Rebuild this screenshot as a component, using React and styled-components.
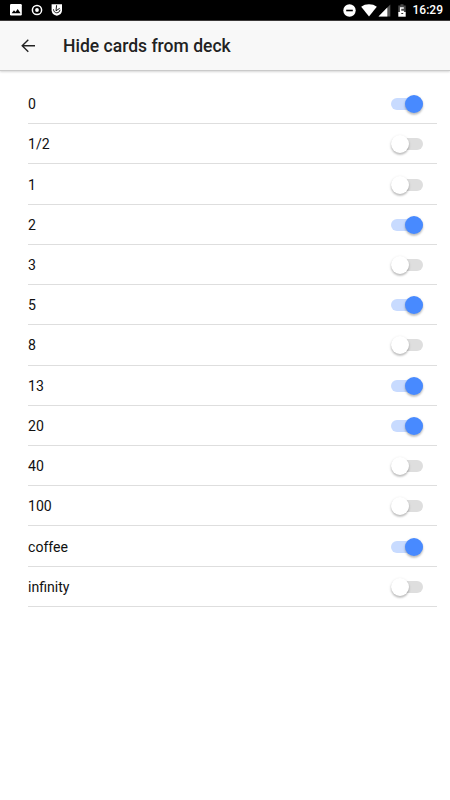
import React, { useState } from "react";
import styled, { createGlobalStyle } from "styled-components";

const CARDS = [
  { label: "0", hidden: true },
  { label: "1/2", hidden: false },
  { label: "1", hidden: false },
  { label: "2", hidden: true },
  { label: "3", hidden: false },
  { label: "5", hidden: true },
  { label: "8", hidden: false },
  { label: "13", hidden: true },
  { label: "20", hidden: true },
  { label: "40", hidden: false },
  { label: "100", hidden: false },
  { label: "coffee", hidden: true },
  { label: "infinity", hidden: false },
];

export default function App() {
  const [cards, setCards] = useState(CARDS);

  const toggle = (label) => {
    setCards((prev) =>
      prev.map((c) => (c.label === label ? { ...c, hidden: !c.hidden } : c))
    );
  };

  return (
    <Screen>
      <GlobalStyle />
      <StatusBar />

      <Header>
        <BackButton type="button" aria-label="Back">
          <svg width="16" height="16" viewBox="0 0 16 16">
            <path
              d="M15 7.700H2.300M8.300 1.700 2.200 7.700l6.100 6"
              fill="none"
              stroke="#222"
              strokeWidth="1.4"
            />
          </svg>
        </BackButton>
        <Title>Hide cards from deck</Title>
      </Header>

      <List>
        {cards.map((card) => (
          <Row key={card.label}>
            <Label>{card.label}</Label>
            <Toggle
              type="button"
              role="switch"
              aria-label={card.label}
              aria-checked={card.hidden}
              $on={card.hidden}
              onClick={() => toggle(card.label)}
            >
              <Knob $on={card.hidden} />
            </Toggle>
          </Row>
        ))}
      </List>
    </Screen>
  );
}

function StatusBar() {
  return (
    <Bar>
      <Notifications>
        {/* picture */}
        <svg width="12" height="12" viewBox="0 0 12 12">
          <rect width="11.8" height="11.4" rx="1.2" fill="#fff" />
          <path d="M1.6 9.3 4 6.2l1.5 1.9 2.2-3 2.9 4.2z" fill="#000" />
        </svg>
        {/* record */}
        <svg width="12" height="12" viewBox="0 0 12 12">
          <circle cx="6" cy="6" r="4.6" fill="none" stroke="#fff" strokeWidth="1.5" />
          <circle cx="6" cy="6" r="1.9" fill="#fff" />
        </svg>
        {/* shield */}
        <svg width="12" height="12" viewBox="0 0 12 12">
          <path d="M.6.2H11v6.1c0 3-2.100 4.900-5.200 5.500C2.700 11.200.6 9.300.6 6.300z" fill="#fff" />
          <path
            d="M5.600 1.200 5 6.800M2.500 5.300c.1 2.200 1.300 3.500 3.200 3.500s3-1.200 3.300-3M4.900 6.900l3.800-2.600"
            fill="none"
            stroke="#000"
            strokeWidth="0.9"
          />
        </svg>
      </Notifications>

      <System>
        {/* do not disturb */}
        <svg width="13" height="13" viewBox="0 0 13 13">
          <circle cx="6.5" cy="6.5" r="6.2" fill="#fff" />
          <rect x="3.2" y="5.700" width="6.6" height="1.6" fill="#000" />
        </svg>
        {/* wifi */}
        <Wifi width="16" height="13" viewBox="0 0 16 13">
          <path d="M8 12.600.2 2.800C2.400 1.100 5 .3 8 .3s5.600.8 7.800 2.500z" fill="#fff" />
        </Wifi>
        {/* signal */}
        <Signal width="13" height="13" viewBox="0 0 13 13">
          <path d="M12.300.5v12H.5z" fill="#555" />
          <path d="M9.300 3.500v9H.5z" fill="#fff" />
        </Signal>
        {/* battery */}
        <Battery width="8" height="13" viewBox="0 0 8 13">
          <path d="M2.500.2h3v1.200h2.200v7H.3v-7h2.200z" fill="#4a4a4a" />
          <path d="M.3 8h7.400v4.700H.3z" fill="#fff" />
          <path d="M5.800 4H2.600v3.500h2.700V9" fill="none" stroke="#fff" strokeWidth="1.300" />
          <path d="M3.300 9.500h1.900" stroke="#333" strokeWidth="1" />
        </Battery>
        <Clock>16:29</Clock>
      </System>
    </Bar>
  );
}

/* ---------------------- styled-components ---------------------- */

const GlobalStyle = createGlobalStyle`
  * { box-sizing: border-box; }
  body {
    margin: 0;
    background: #fff;
    font-family: Roboto, "Liberation Sans", sans-serif;
  }
`;

const Screen = styled.div`
  height: 800px;
  background: #fff;
  overflow: hidden;
`;

const Bar = styled.div`
  display: flex;
  align-items: center;
  justify-content: space-between;
  height: 21px;
  padding: 0 7px 0 10px;
  background: #000;
  border-bottom: 1px solid #3c3a3a;

  svg { display: block; flex: none; }
`;

const Notifications = styled.div`
  display: flex;
  gap: 8.6px;
`;

const System = styled.div`
  display: flex;
  align-items: center;
`;

const Wifi = styled.svg`
  margin-left: 5px;
`;

const Signal = styled.svg`
  margin-left: 1px;
`;

const Battery = styled.svg`
  margin-left: 7px;
`;

const Clock = styled.span`
  margin-left: 7px;
  font-size: 12px;
  line-height: 20px;
  font-weight: 500;
  color: #fff;
`;

const Header = styled.header`
  display: flex;
  align-items: center;
  height: 50px;
  padding-left: 20px;
  background: #f8f8f8;
  border-bottom: 1px solid #cacaca;
  box-shadow: 0 1px 2px rgba(0, 0, 0, 0.16);
`;

const BackButton = styled.button`
  display: flex;
  align-items: center;
  justify-content: center;
  width: 16px;
  height: 32px;
  padding: 0;
  border: 0;
  background: transparent;
`;

const Title = styled.h1`
  margin: 0 0 0 27px;
  font-size: 17.55px;
  line-height: 24px;
  font-weight: 500;
  color: #222;
`;

const List = styled.ul`
  margin: 0;
  padding: 13px 13px 0 28px;
  list-style: none;
`;

const Row = styled.li`
  display: flex;
  align-items: center;
  justify-content: space-between;
  height: 40.23px;
  padding: 1px 14px 0 0;
  border-bottom: 1px solid #dedede;
`;

const Label = styled.span`
  font-size: 14.1px;
  line-height: 20px;
  color: #111;
`;

const Toggle = styled.button`
  display: flex;
  align-items: center;
  justify-content: ${({ $on }) => ($on ? "flex-end" : "flex-start")};
  width: 32px;
  height: 12px;
  padding: 0;
  border: 0;
  border-radius: 6px;
  background: ${({ $on }) => ($on ? "#c8dbff" : "#dedede")};
`;

const Knob = styled.span`
  flex: none;
  width: 18px;
  height: 18px;
  border-radius: 50%;
  background: ${({ $on }) => ($on ? "#488aff" : "#fff")};
  box-shadow: 0 2px 2px rgba(0, 0, 0, 0.16), 0 1px 3px rgba(0, 0, 0, 0.16);
`;
